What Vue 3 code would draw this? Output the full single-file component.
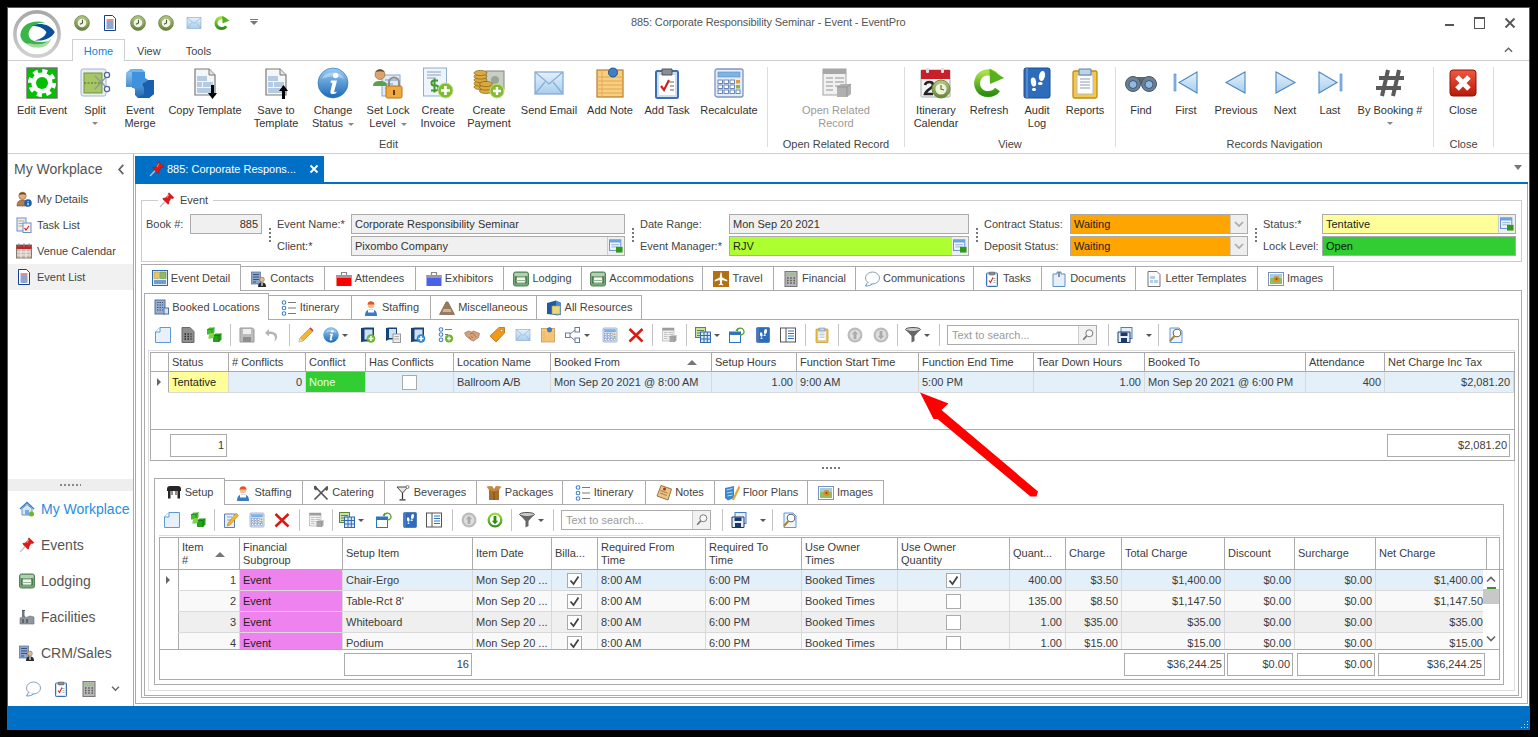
<script setup>
const qat = ['clock', 'doc', 'clock', 'clock', 'mail', 'refresh']

const ribbon = [
  { label: 'Edit', w: 758, items: [
    { i: 'gear', w: 64, t: ['Edit Event'] },
    { i: 'split', w: 42, t: ['Split'], caret: 'below' },
    { i: 'merge', w: 48, t: ['Event', 'Merge'] },
    { i: 'tplDown', w: 82, t: ['Copy Template'] },
    { i: 'tplUp', w: 60, t: ['Save to', 'Template'] },
    { i: 'info', w: 54, t: ['Change', 'Status'], caret: 'inline' },
    { i: 'lock', w: 56, t: ['Set Lock', 'Level'], caret: 'inline' },
    { i: 'invoice', w: 44, t: ['Create', 'Invoice'] },
    { i: 'coins', w: 58, t: ['Create', 'Payment'] },
    { i: 'mail', w: 62, t: ['Send Email'] },
    { i: 'note', w: 60, t: ['Add Note'] },
    { i: 'task', w: 54, t: ['Add Task'] },
    { i: 'calc', w: 70, t: ['Recalculate'] }
  ] },
  { label: 'Open Related Record', w: 137, items: [
    { i: 'related', w: 136, t: ['Open Related', 'Record'], off: true }
  ] },
  { label: 'View', w: 211, items: [
    { i: 'calendar', w: 62, t: ['Itinerary', 'Calendar'] },
    { i: 'refresh', w: 44, t: ['Refresh'] },
    { i: 'audit', w: 52, t: ['Audit', 'Log'] },
    { i: 'reports', w: 44, t: ['Reports'] }
  ] },
  { label: 'Records Navigation', w: 318, items: [
    { i: 'find', w: 50, t: ['Find'] },
    { i: 'first', w: 40, t: ['First'] },
    { i: 'prev', w: 60, t: ['Previous'] },
    { i: 'next', w: 38, t: ['Next'] },
    { i: 'last', w: 52, t: ['Last'] },
    { i: 'hash', w: 68, t: ['By Booking #'], caret: 'below' }
  ] },
  { label: 'Close', w: 60, items: [{ i: 'close', w: 58, t: ['Close'] }] }
]

const myItems = [
  { i: 'person', t: 'My Details' },
  { i: 'tasklist', t: 'Task List' },
  { i: 'venue', t: 'Venue Calendar' },
  { i: 'doc', t: 'Event List', on: true }
]
const navItems = [
  { i: 'home', t: 'My Workplace', on: true },
  { i: 'pin', t: 'Events' },
  { i: 'bed', t: 'Lodging' },
  { i: 'factory', t: 'Facilities' },
  { i: 'crm', t: 'CRM/Sales' }
]

const formSections = [
  { lw: 44, iw: 72, rows: [
    { l: 'Book #:', v: '885', cls: 'ro right' },
    { blank: true }
  ] },
  { lw: 74, iw: 274, rows: [
    { l: 'Event Name:*', v: 'Corporate Responsibility Seminar', cls: 'ro' },
    { l: 'Client:*', v: 'Pixombo Company', cls: 'ro', btn: 'look' }
  ] },
  { lw: 89, iw: 240, rows: [
    { l: 'Date Range:', v: 'Mon Sep 20 2021', cls: 'ro' },
    { l: 'Event Manager:*', v: 'RJV', cls: 'lime', btn: 'look' }
  ] },
  { lw: 86, iw: 178, rows: [
    { l: 'Contract Status:', v: 'Waiting', cls: 'orange', btn: 'combo' },
    { l: 'Deposit Status:', v: 'Waiting', cls: 'orange', btn: 'combo' }
  ] },
  { lw: 59, iw: 194, rows: [
    { l: 'Status:*', v: 'Tentative', cls: 'yellow', btn: 'look' },
    { l: 'Lock Level:', v: 'Open', cls: 'green' }
  ] }
]

const mainTabs = [
  { t: 'Event Detail', i: 'detail', w: 100, on: true },
  { t: 'Contacts', i: 'crm', w: 84 },
  { t: 'Attendees', i: 'attend', w: 91 },
  { t: 'Exhibitors', i: 'exhib', w: 88 },
  { t: 'Lodging', i: 'bed', w: 78 },
  { t: 'Accommodations', i: 'bed', w: 121 },
  { t: 'Travel', i: 'plane', w: 71 },
  { t: 'Financial', i: 'calcGray', w: 82 },
  { t: 'Communications', i: 'chat', w: 118 },
  { t: 'Tasks', i: 'task', w: 68 },
  { t: 'Documents', i: 'clipdoc', w: 94 },
  { t: 'Letter Templates', i: 'letter', w: 122 },
  { t: 'Images', i: 'image', w: 76 }
]
const subTabs = [
  { t: 'Booked Locations', i: 'building', w: 125, on: true },
  { t: 'Itinerary', i: 'itin', w: 83 },
  { t: 'Staffing', i: 'staff', w: 79 },
  { t: 'Miscellaneous', i: 'mountain', w: 106 },
  { t: 'All Resources', i: 'resources', w: 105 }
]
const lowerTabs = [
  { t: 'Setup', i: 'table', w: 71, on: true },
  { t: 'Staffing', i: 'staff', w: 78 },
  { t: 'Catering', i: 'cutlery', w: 82 },
  { t: 'Beverages', i: 'martini', w: 92 },
  { t: 'Packages', i: 'package', w: 86 },
  { t: 'Itinerary', i: 'itin', w: 83 },
  { t: 'Notes', i: 'notes', w: 69 },
  { t: 'Floor Plans', i: 'floor', w: 93 },
  { t: 'Images', i: 'image', w: 76 }
]

const toolsUpper = [
  { i: 'newdoc', w: 25 }, { i: 'docgrid', w: 26 }, { i: 'cubes', w: 26 }, { s: 1, w: 6 },
  { i: 'saveGray', w: 28 }, { i: 'undo', w: 22 }, { s: 1, w: 12 },
  { i: 'pencil', w: 22 }, { i: 'info', w: 36, c: 1 },
  { i: 'docAddG', w: 30 }, { i: 'docCopy', w: 20 }, { i: 'docAddB', w: 30 }, { i: 'itinAdd', w: 26 },
  { i: 'shake', w: 26 }, { i: 'tag', w: 24 }, { i: 'mail', w: 28 }, { i: 'note', w: 22 },
  { i: 'nodes', w: 37, c: 1 }, { i: 'calc', w: 28 }, { i: 'redx', w: 24 }, { s: 1, w: 8 },
  { i: 'related', w: 26 }, { s: 1, w: 8 }, { i: 'gridview', w: 34, c: 1 },
  { i: 'winArrow', w: 26 }, { i: 'audit', w: 26 }, { i: 'listpanel', w: 24 }, { s: 1, w: 10 },
  { i: 'reports', w: 24 }, { s: 1, w: 8 }, { i: 'upGray', w: 26 }, { i: 'downGray', w: 26 }, { s: 1, w: 6 },
  { i: 'funnel', w: 34, c: 1 }, { s: 1, w: 10 }
]
const toolsUpperEnd = [
  { s: 1, w: 8 }, { i: 'saveBlue', w: 42, c: 1, wide: true }, { s: 1, w: 8 }, { i: 'magdoc', w: 28 }
]
const toolsLower = [
  { i: 'newdoc', w: 26 }, { i: 'cubes', w: 26 }, { s: 1, w: 6 },
  { i: 'editdoc', w: 28 }, { i: 'calc', w: 24 }, { i: 'redx', w: 26 }, { s: 1, w: 8 },
  { i: 'related', w: 26 }, { s: 1, w: 6 }, { i: 'gridview', w: 33, c: 1 },
  { i: 'winArrow', w: 32 }, { i: 'audit', w: 20 }, { i: 'listpanel', w: 28 }, { s: 1, w: 8 },
  { i: 'upGray', w: 26 }, { i: 'downGreen', w: 26 }, { s: 1, w: 6 },
  { i: 'funnel', w: 34, c: 1 }, { s: 1, w: 10 }
]

const upperCols = [
  { h: '', w: 18 }, { h: 'Status', w: 60 }, { h: '# Conflicts', w: 77 }, { h: 'Conflict', w: 60 },
  { h: 'Has Conflicts', w: 88 }, { h: 'Location Name', w: 97 }, { h: 'Booked From', w: 161, sort: true },
  { h: 'Setup Hours', w: 85 }, { h: 'Function Start Time', w: 122 }, { h: 'Function End Time', w: 115 },
  { h: 'Tear Down Hours', w: 111 }, { h: 'Booked To', w: 161 }, { h: 'Attendance', w: 79 },
  { h: 'Net Charge Inc Tax', w: 129 }
]
const upperRow = [
  { ind: true }, { v: 'Tentative', c: 'c-yellow' }, { v: '0', c: 'r' }, { v: 'None', c: 'c-none' },
  { box: 'off' }, { v: 'Ballroom A/B' }, { v: 'Mon Sep 20 2021 @ 8:00 AM' }, { v: '1.00', c: 'r' },
  { v: '9:00 AM' }, { v: '5:00 PM' }, { v: '1.00', c: 'r' }, { v: 'Mon Sep 20 2021 @ 6:00 PM' },
  { v: '400', c: 'r' }, { v: '$2,081.20', c: 'r' }
]

const lowerCols = [
  { h: '', w: 19 }, { h: ['Item', '#'], w: 61, sort: true }, { h: ['Financial', 'Subgroup'], w: 103 },
  { h: ['Setup Item'], w: 130 }, { h: ['Item Date'], w: 79 }, { h: ['Billa...'], w: 46 },
  { h: ['Required From', 'Time'], w: 108 }, { h: ['Required To', 'Time'], w: 96 },
  { h: ['Use Owner', 'Times'], w: 96 }, { h: ['Use Owner', 'Quantity'], w: 112 },
  { h: ['Quant...'], w: 56 }, { h: ['Charge'], w: 56 }, { h: ['Total Charge'], w: 103 },
  { h: ['Discount'], w: 70 }, { h: ['Surcharge'], w: 81 }, { h: ['Net Charge'], w: 111 }
]
const lowerData = [
  ['1', 'Chair-Ergo', true, '400.00', '$3.50', '$1,400.00', '$1,400.00', 'sel'],
  ['2', 'Table-Rct 8\'', false, '135.00', '$8.50', '$1,147.50', '$1,147.50', 'odd'],
  ['3', 'Whiteboard', false, '1.00', '$35.00', '$35.00', '$35.00', 'even'],
  ['4', 'Podium', false, '1.00', '$15.00', '$15.00', '$15.00', 'odd']
]
const lowerRows = lowerData.map(([n, item, qty, q, ch, tot, net, kind]) => ({
  kind,
  cells: [
    { ind: n === '1' }, { v: n, c: 'r c-item' }, { v: 'Event', c: 'c-pink' }, { v: item },
    { v: 'Mon Sep 20 ...' }, { box: 'on' }, { v: '8:00 AM' }, { v: '6:00 PM' }, { v: 'Booked Times' },
    { box: qty ? 'on' : 'off' }, { v: q, c: 'r' }, { v: ch, c: 'r' }, { v: tot, c: 'r' },
    { v: '$0.00', c: 'r' }, { v: '$0.00', c: 'r' }, { v: net, c: 'r' }
  ]
}))
</script>

<template>
  <div class="screen">
    <div class="window">
      <svg class="defs" width="0" height="0" aria-hidden="true">
        <defs>
          <linearGradient id="gb" x1="0" y1="0" x2="0" y2="1"><stop offset="0" stop-color="#9ccdf2"/><stop offset="1" stop-color="#1d68b8"/></linearGradient>
          <linearGradient id="gl" x1="0" y1="0" x2="0" y2="1"><stop offset="0" stop-color="#e4f1fb"/><stop offset="1" stop-color="#a9cdec"/></linearGradient>
          <linearGradient id="gg" x1="0" y1="0" x2="0" y2="1"><stop offset="0" stop-color="#a9e04a"/><stop offset="1" stop-color="#2c8f10"/></linearGradient>
          <linearGradient id="gr" x1="0" y1="0" x2="0" y2="1"><stop offset="0" stop-color="#f0583f"/><stop offset="1" stop-color="#b81808"/></linearGradient>
          <linearGradient id="gc" x1="0" y1="0" x2="0" y2="1"><stop offset="0" stop-color="#b7c98a"/><stop offset="1" stop-color="#66813a"/></linearGradient>
          <linearGradient id="gring" x1="0" y1="0" x2="0" y2="1"><stop offset="0" stop-color="#a8a8a8"/><stop offset="1" stop-color="#d0d0d0"/></linearGradient>
        </defs>

        <symbol id="gear" viewBox="0 0 32 32"><rect x="1" y="1" width="30" height="30" fill="#00c000" stroke="#6f6f6f" stroke-width="1.4"/><circle cx="16" cy="16" r="12" fill="none" stroke="#fff" stroke-width="4" stroke-dasharray="5 4.42"/><circle cx="16" cy="16" r="10.6" fill="#fff"/><circle cx="16" cy="16" r="6" fill="#00c000"/></symbol>
        <symbol id="split" viewBox="0 0 32 32"><rect x="2" y="2" width="25" height="27" rx="2" fill="#e8eff7" stroke="#a4b4ca"/><rect x="5" y="6" width="18" height="20" fill="#a6c763" stroke="#73933c"/><path d="M5 16h19" stroke="#4c6a24" stroke-dasharray="2 1.5"/><path d="M16 9l11 11M16 22L27 10" stroke="#8c96a8" stroke-width="1.3"/><circle cx="28" cy="8" r="2.6" fill="#fff" stroke="#4d68a0" stroke-width="1.3"/><circle cx="28" cy="22" r="2.6" fill="#fff" stroke="#4d68a0" stroke-width="1.3"/></symbol>
        <symbol id="merge" viewBox="0 0 32 32"><path d="M2 6l5-4h11l3 3v6l3 2h6v14l-5 4H14l-3-3v-6l-3-2H2z" fill="url(#gb)"/><path d="M2 6l5-4h11l3 3H8z" fill="#6db5ee"/><path d="M24 13h6v14l-5 4H14l6-4v-6l-2-4z" fill="#1a5fb0"/><path d="M8 5h13v6l3 2-6 4-4 4H8z" fill="#3f92de"/></symbol>
        <symbol id="tplDown" viewBox="0 0 32 32"><path d="M6 2h14l6 6v20H6z" fill="#f5f6f8" stroke="#7a7a7a" stroke-width="1.2"/><path d="M20 2v6h6" fill="#dfe2e6" stroke="#7a7a7a"/><path d="M8 9h10v5H8zM8 15h5v5H8zM14 15h10v5H14zM8 21h16v5H8z" fill="#b5cbe2"/><path d="M22 18h3v8h3l-4.500 6-4.500-6h3z" fill="#000"/></symbol>
        <symbol id="tplUp" viewBox="0 0 32 32"><path d="M6 2h14l6 6v20H6z" fill="#f5f6f8" stroke="#7a7a7a" stroke-width="1.2"/><path d="M20 2v6h6" fill="#dfe2e6" stroke="#7a7a7a"/><path d="M8 9h10v5H8zM8 15h5v5H8zM14 15h10v5H14zM8 21h16v5H8z" fill="#b5cbe2"/><path d="M22 32h3v-8h3l-4.500-6-4.500 6h3z" fill="#000"/></symbol>
        <symbol id="info" viewBox="0 0 32 32"><circle cx="16" cy="16" r="15" fill="url(#gb)" stroke="#1f6fb4" stroke-width=".6"/><path d="M5 12a11.500 9 0 0 1 22 0c-6-3.500-16-3.500-22 0z" fill="#fff" opacity=".35"/><circle cx="18.600" cy="8.500" r="2.700" fill="#fff"/><path d="M14 13.500h6l-2.800 11c-.2.9.7 1 2 0l.4.9c-2 2-6.800 2.800-6.200-.9l2.100-8.700h-2z" fill="#fff"/></symbol>
        <symbol id="lock" viewBox="0 0 32 32"><rect x="10" y="8" width="18" height="21" fill="#dfeafb" stroke="#8ba6cc"/><path d="M13 13h12M13 17h8M13 21h6" stroke="#7792bd"/><path d="M1 19c0-4 3-5 7-5s7 1 7 5z" fill="#5aa24a"/><circle cx="8" cy="7.500" r="5" fill="#d9a46e" stroke="#8a5a2a" stroke-width=".6"/><path d="M3.500 5c1-3.500 8-3.500 9 0-3-1-6-1-9 0z" fill="#6a4522"/><path d="M17 19v-3.500a5 5 0 0 1 10 0V19" fill="none" stroke="#8d8d8d" stroke-width="2"/><rect x="14" y="19" width="16" height="12" rx="1.500" fill="#f0a93c" stroke="#b57518"/><rect x="21" y="23" width="2" height="5" fill="#5a3c10"/></symbol>
        <symbol id="invoice" viewBox="0 0 32 32"><rect x="1.500" y="1" width="23" height="28" fill="#eef4fb" stroke="#90add0"/><path d="M5 5h14M5 8h14M5 11h9" stroke="#8da0b8"/><path d="M16 13.500h-4a2.500 2.500 0 0 0 0 5h2a2.500 2.500 0 0 1 0 5H9M12.500 11.500v14" fill="none" stroke="#3c9b2d" stroke-width="2"/><circle cx="23.500" cy="23.500" r="7.500" fill="#82bb2e" stroke="#c8dd9a"/><path d="M23.500 19v9M19 23.500h9" stroke="#fff" stroke-width="2.600"/></symbol>
        <symbol id="coins" viewBox="0 0 32 32"><rect x="13" y="4" width="18" height="18" fill="#c9cfc5" stroke="#7e8778"/><circle cx="22" cy="13" r="4" fill="#9aa594"/><g fill="#d9a83f" stroke="#8a6414" stroke-width=".7"><ellipse cx="7.500" cy="20" rx="6.500" ry="2.600"/><ellipse cx="7.500" cy="16.500" rx="6.500" ry="2.600"/><ellipse cx="7.500" cy="13" rx="6.500" ry="2.600"/><ellipse cx="7.500" cy="9.500" rx="6.500" ry="2.600"/><ellipse cx="7.500" cy="6" rx="6.500" ry="2.600"/><ellipse cx="13" cy="24" rx="6.500" ry="2.600"/><ellipse cx="13" cy="20.500" rx="6.500" ry="2.600"/><ellipse cx="13" cy="17" rx="6.500" ry="2.600"/></g><circle cx="24" cy="24" r="7" fill="#82bb2e" stroke="#c8dd9a"/><path d="M24 20v8M20 24h8" stroke="#fff" stroke-width="2.400"/></symbol>
        <symbol id="mail" viewBox="0 0 32 32"><rect x="2" y="5" width="28" height="22" fill="url(#gl)" stroke="#7ea6cf" stroke-width="1.200"/><path d="M2 5l14 12L30 5M2 27l10-12M30 27L20 15" fill="none" stroke="#86aed6" stroke-width="1.200"/></symbol>
        <symbol id="note" viewBox="0 0 32 32"><rect x="3" y="3" width="26" height="27" fill="#f8cf80" stroke="#b87c2c" stroke-width="1.200"/><path d="M3 10h26M3 14h26M3 18h26M3 22h26M3 26h26" stroke="#e2a650"/><path d="M8 3v27" stroke="#e8a860"/><circle cx="19" cy="5.500" r="4.500" fill="#3f7fc8" stroke="#1f5290"/></symbol>
        <symbol id="task" viewBox="0 0 32 32"><rect x="5" y="4" width="22" height="27" rx="1.500" fill="#cfdff2" stroke="#3d6eb0" stroke-width="2"/><rect x="8" y="8" width="16" height="20" fill="#fff"/><path d="M11 2h10v6H11z" fill="#8a8f96" stroke="#555"/><path d="M10 19l3 4 5-10" fill="none" stroke="#d02020" stroke-width="2.200"/><path d="M17 15h6M19 19h4M19 23h4" stroke="#666"/></symbol>
        <symbol id="calc" viewBox="0 0 32 32"><rect x="2" y="2" width="28" height="28" rx="2" fill="#e4ecf8" stroke="#7b96c4" stroke-width="1.300"/><rect x="5" y="5" width="22" height="5" fill="#7eb3e6" stroke="#5a8cc4" stroke-width=".6"/><g fill="#fff" stroke="#5d7bb0" stroke-width=".9"><rect x="5" y="13" width="4.500" height="3.500"/><rect x="11" y="13" width="4.500" height="3.500"/><rect x="17" y="13" width="4.500" height="3.500"/><rect x="5" y="18" width="4.500" height="3.500"/><rect x="11" y="18" width="4.500" height="3.500"/><rect x="17" y="18" width="4.500" height="3.500"/><rect x="5" y="23" width="4.500" height="3.500"/><rect x="11" y="23" width="4.500" height="3.500"/><rect x="17" y="23" width="4.500" height="3.500"/></g><rect x="23" y="13" width="4" height="3.500" fill="#e89a3c"/><rect x="23" y="18" width="4" height="3.500" fill="#86b84a"/><rect x="23" y="23" width="4" height="3.500" fill="#fff" stroke="#5d7bb0" stroke-width=".9"/></symbol>
        <symbol id="related" viewBox="0 0 32 32"><rect x="3" y="2" width="23" height="26" fill="#f0f0f0" stroke="#9a9a9a"/><rect x="3" y="2" width="23" height="5" fill="#9e9e9e"/><path d="M6 11h7M15 11h9M6 15h7M15 15h9M6 19h7M15 19h7M6 23h7" stroke="#aaa" stroke-width="1.300"/><path d="M17 20l4-3h10v10l-4 3H17z" fill="#a8a8a8"/><path d="M27 20v10M17 20h10l4-3" fill="none" stroke="#888"/></symbol>
        <symbol id="calendar" viewBox="0 0 32 32"><rect x="1" y="3" width="29" height="27" rx="1" fill="#f4f4f4" stroke="#aaa"/><rect x="1" y="3" width="29" height="9" fill="#c8202a"/><rect x="6" y="1" width="3" height="5" rx="1" fill="#ddd"/><rect x="21" y="1" width="3" height="5" rx="1" fill="#ddd"/><path d="M5 18c1-4 8-4 8 0 0 3-7 5-8 9h8" fill="none" stroke="#222" stroke-width="2.600"/><circle cx="21" cy="22" r="9" fill="url(#gc)" stroke="#6b8a3a"/><circle cx="21" cy="22" r="5.600" fill="#eef2d8"/><path d="M21 18v4l3 1" fill="none" stroke="#5b7a2a" stroke-width="1.200"/></symbol>
        <symbol id="refresh" viewBox="0 0 32 32"><path d="M23 8.500C18 3.500 8 4.500 5 12c-3 7.500 2 15 10 15 4 0 7.500-1.600 9.500-4.500" fill="none" stroke="url(#gg)" stroke-width="6"/><path d="M16.500 1.500L31 11l-14 6z" fill="#57b01d"/></symbol>
        <symbol id="audit" viewBox="0 0 32 32"><rect x="3" y="1" width="26" height="30" rx="2" fill="#2d6cba" stroke="#1d4d90"/><path d="M6 1v30" stroke="#79a6db"/><g fill="#fff"><ellipse cx="21" cy="9" rx="3" ry="5" transform="rotate(12 21 9)"/><rect x="17" y="15" width="4.500" height="3" rx="1.500"/><ellipse cx="12.500" cy="15" rx="2.600" ry="4.500" transform="rotate(-10 12.500 15)"/><rect x="11" y="21" width="4" height="3" rx="1.500"/></g></symbol>
        <symbol id="reports" viewBox="0 0 32 32"><rect x="4" y="4" width="24" height="27" rx="1.500" fill="#f4c948" stroke="#c08a18" stroke-width="1.300"/><rect x="8" y="8" width="16" height="19" fill="#fdfdfd" stroke="#b6bcc4"/><path d="M10 2h12v6H10z" fill="#bcd3ea" stroke="#5a7ea6"/><path d="M11 12h10M11 15h10M11 18h10M11 21h10" stroke="#8aa0b8"/></symbol>
        <symbol id="find" viewBox="0 0 32 32"><rect x="12" y="10" width="8" height="6" fill="#5d6b78"/><circle cx="8" cy="17" r="7.500" fill="#6d7f90" stroke="#4a5866"/><circle cx="24" cy="17" r="7.500" fill="#6d7f90" stroke="#4a5866"/><circle cx="8" cy="17.500" r="4" fill="#8fb9dd" stroke="#3a5a80"/><circle cx="24" cy="17.500" r="4" fill="#8fb9dd" stroke="#3a5a80"/></symbol>
        <symbol id="first" viewBox="0 0 32 32"><rect x="4" y="7" width="2" height="17" fill="#8dbde8" stroke="#4a88c6" stroke-width=".6"/><path d="M27 5v21L9 15.500z" fill="url(#gl)" stroke="#4a88c6" stroke-width="1.100"/></symbol>
        <symbol id="prev" viewBox="0 0 32 32"><path d="M25 5v21L6 15.500z" fill="url(#gl)" stroke="#4a88c6" stroke-width="1.100"/></symbol>
        <symbol id="next" viewBox="0 0 32 32"><path d="M7 5v21l19-10.500z" fill="url(#gl)" stroke="#4a88c6" stroke-width="1.100"/></symbol>
        <symbol id="last" viewBox="0 0 32 32"><rect x="26" y="7" width="2" height="17" fill="#8dbde8" stroke="#4a88c6" stroke-width=".6"/><path d="M5 5v21l18-10.500z" fill="url(#gl)" stroke="#4a88c6" stroke-width="1.100"/></symbol>
        <symbol id="hash" viewBox="0 0 32 32"><path d="M14 3L8 29M25 3l-6 26M5 11h25M2 21h25" fill="none" stroke="#5a5a5a" stroke-width="4"/></symbol>
        <symbol id="close" viewBox="0 0 32 32"><rect x="3" y="3" width="26" height="26" rx="3" fill="url(#gr)" stroke="#8f1408"/><path d="M10 10l12 12M22 10L10 22" stroke="#fff" stroke-width="5"/></symbol>

        <symbol id="clock" viewBox="0 0 16 16"><circle cx="8" cy="8" r="7.400" fill="url(#gc)" stroke="#5c7534" stroke-width=".7"/><circle cx="8" cy="8" r="4.300" fill="#f2f4ea"/><path d="M8.500 4.700V8L6 9.300" fill="none" stroke="#4c5a36" stroke-width="1.100"/></symbol>
        <symbol id="doc" viewBox="0 0 16 16"><path d="M2.500.5h8l3 3v12h-11z" fill="#fff" stroke="#143f8c"/><path d="M4.500 5h7" stroke="#c22" /><path d="M4.500 7h7M4.500 9h7M4.500 11h7M4.500 13h7" stroke="#1d4f9c"/></symbol>
        <symbol id="person" viewBox="0 0 16 16"><path d="M1 15c0-4 2-6 5.500-6S12 11 12 15z" fill="#b07f4e" stroke="#70502a" stroke-width=".6"/><circle cx="6.500" cy="4.800" r="3.700" fill="#e2b07e" stroke="#845a30" stroke-width=".6"/><path d="M3 4c.6-3.500 6.500-3.500 7 0-2-1-4.500-1-7 0z" fill="#6b4622"/><circle cx="12" cy="12" r="3.800" fill="#1e5fb0"/><path d="M12 10.200v.8M12 11.800v2.400" stroke="#fff" stroke-width="1.200"/></symbol>
        <symbol id="tasklist" viewBox="0 0 16 16"><rect x="1" y="1" width="9" height="13" fill="#e8eef8" stroke="#6e8fbe"/><path d="M2.500 4h6M2.500 6.500h6M2.500 9h6" stroke="#e0a050"/><rect x="7" y="6" width="8" height="9.500" fill="#f4f4f4" stroke="#6e8fbe"/><path d="M8.500 11l1.500 2 3-4" fill="none" stroke="#c22" stroke-width="1.200"/></symbol>
        <symbol id="venue" viewBox="0 0 16 16"><rect x=".5" y="2" width="15" height="13" fill="#c9bdb1" stroke="#857a70"/><rect x=".5" y="2" width="15" height="4" fill="#b8282c"/><path d="M3 .5v3M8 .5v3M13 .5v3" stroke="#888" stroke-width="1.300"/><path d="M5 6v9M10 6v9M1 9h14M1 12h14" stroke="#f0ece8"/></symbol>
        <symbol id="home" viewBox="0 0 16 16"><path d="M1 8l7-6.500L15 8" fill="none" stroke="#3a7cc0" stroke-width="1.500"/><path d="M3 7.500V14h10V7.500L8 3.500z" fill="#d7e6f5" stroke="#6a94c0"/><rect x="6" y="9" width="4" height="5" fill="#7ca8d6"/><circle cx="12.500" cy="13" r="2.500" fill="#6bb62e"/></symbol>
        <symbol id="pin" viewBox="0 0 16 16"><path d="M6 9.800L1 15" stroke="#c4c4c4" stroke-width="1.300"/><path d="M10 .8l5 5-1.800.8-1.200-.3L9.800 10l.2 1.500-1 .8-5.300-5.300.8-1 1.500.2L9.500 3l-.3-1.200z" fill="#e01818" stroke="#981010" stroke-width=".5"/><path d="M9.800 2.500L8 6" stroke="#ff8a7a"/></symbol>
        <symbol id="bed" viewBox="0 0 16 16"><rect x=".5" y="1" width="15" height="14" rx="2" fill="#76a878" stroke="#558058"/><rect x="1.500" y="2" width="13" height="3" fill="#b3d0b4"/><path d="M3 6.500h10v5H3z" fill="#f3f6f0"/><path d="M3 5.500v7M13 5.500v7" stroke="#3b6040" stroke-width="1.300"/><path d="M3 9.500h10" stroke="#98b39a"/></symbol>
        <symbol id="factory" viewBox="0 0 16 16"><path d="M1 9l5-2v2l5-2 4 1v7H1z" fill="#9097a0" stroke="#666c74" stroke-width=".6"/><rect x="3" y="2" width="2.500" height="6" fill="#707880"/><path d="M3 1.500h3" stroke="#555"/><path d="M3 11h2M7 11h2M3 13h2M7 13h2" stroke="#333" stroke-width="1.100"/></symbol>
        <symbol id="crm" viewBox="0 0 16 16"><rect x=".5" y="1" width="9" height="12" fill="#8aa6cc" stroke="#566c92" stroke-width=".7"/><path d="M2 3.500h6M2 6h6M2 8.500h6M2 11h3" stroke="#3d5478"/><circle cx="11" cy="8.500" r="2.400" fill="#e4b88a" stroke="#6a4a28" stroke-width=".4"/><path d="M7 16c0-3.500 1.500-4.500 4-4.500s4 1 4 4.500z" fill="#2b2b2b"/><path d="M10.500 11.800h1l.2 3h-1.400z" fill="#fff"/></symbol>
        <symbol id="chat" viewBox="0 0 16 16"><ellipse cx="8.500" cy="7" rx="7" ry="6" fill="#fff" stroke="#8ea2b4"/><path d="M3.500 11.500L1.500 15c3 0 5-.5 7-2" fill="#fff" stroke="#3f8fcf" stroke-width=".9"/></symbol>
        <symbol id="detail" viewBox="0 0 16 16"><rect x=".5" y=".5" width="15" height="15" fill="#e6eef8" stroke="#2f6ab0"/><rect x="2" y="2" width="5.500" height="6.500" fill="#e4c66a" stroke="#a68a2a" stroke-width=".5"/><rect x="8.500" y="2" width="5.500" height="6.500" fill="#8dbd60" stroke="#5c8a34" stroke-width=".5"/><rect x="2" y="10" width="12" height="4" fill="#6b9fd4"/></symbol>
        <symbol id="attend" viewBox="0 0 16 16"><path d="M5.500 4V1.500h5V4" fill="none" stroke="#8a8a8a" stroke-width="1.200"/><rect x=".5" y="4" width="15" height="11" fill="#f00"/><rect x=".5" y="4" width="15" height="3" fill="#9a9a9a"/></symbol>
        <symbol id="exhib" viewBox="0 0 16 16"><path d="M5.500 4V1.500h5V4" fill="none" stroke="#8a8a8a" stroke-width="1.200"/><rect x=".5" y="4" width="15" height="11" fill="#4a62e8"/><rect x=".5" y="4" width="15" height="3" fill="#9a9a9a"/></symbol>
        <symbol id="plane" viewBox="0 0 16 16"><rect width="16" height="16" fill="#b36f14"/><path d="M7.500 1.500h1l.8 5 5 2.500v1.500l-5-1.500-.5 3.500 1.500 1v1L8 13.800 5.700 14.500v-1l1.500-1-.5-3.500-5 1.500V9l5-2.500z" fill="#fff"/></symbol>
        <symbol id="calcGray" viewBox="0 0 16 16"><rect x="2" y=".5" width="12" height="15" fill="#b7b7b7" stroke="#777"/><rect x="3.500" y="2" width="9" height="3" fill="#9dc58a"/><path d="M4 7h1.500M7.200 7h1.500M10.500 7h1.500M4 9.500h1.500M7.200 9.500h1.500M10.500 9.500h1.500M4 12h1.500M7.200 12h1.500M10.500 12h1.500" stroke="#555" stroke-width="1.400"/></symbol>
        <symbol id="clipdoc" viewBox="0 0 16 16"><path d="M2 3h4V1h4v2h4v12.500H2z" fill="#e7f0fa" stroke="#5a8fcb"/><path d="M8 1v5" stroke="#555" stroke-width="1.200"/></symbol>
        <symbol id="letter" viewBox="0 0 16 16"><path d="M2 .5h9l3 3v12H2z" fill="#fafafa" stroke="#777"/><path d="M4 5h5v3H4zM4 9h3v3H4zM8 9h4v3H8z" fill="#b7cde4"/></symbol>
        <symbol id="image" viewBox="0 0 16 16"><rect x=".5" y="1.500" width="15" height="13" fill="#fff" stroke="#7a93bd"/><rect x="2" y="3" width="12" height="10" fill="#92bb62"/><rect x="2" y="3" width="12" height="4" fill="#a4cce8"/><circle cx="8.500" cy="8" r="3" fill="#d98e20"/><circle cx="8.500" cy="8" r="1" fill="#7c4a08"/></symbol>
        <symbol id="building" viewBox="0 0 16 16"><rect x="2" y="1" width="10" height="14" fill="#96aed0" stroke="#5a7198"/><path d="M4 3.500h6M4 6h6M4 8.500h6M4 11h6" stroke="#3e5580" stroke-dasharray="1.500 1"/><rect x="11" y="9" width="4.500" height="6" fill="#d7e2f0" stroke="#5a7198"/></symbol>
        <symbol id="itin" viewBox="0 0 16 16"><g fill="none" stroke="#3f83c8" stroke-width="1.100"><circle cx="3" cy="2.500" r="1.800"/><circle cx="3" cy="8" r="1.800"/><circle cx="3" cy="13.500" r="1.800"/></g><path d="M7 2.500h8M7 8h8M7 13.500h8" stroke="#7a7a7a" stroke-width="1.100"/></symbol>
        <symbol id="itinAdd" viewBox="0 0 16 16"><g fill="none" stroke="#3f83c8" stroke-width="1.100"><circle cx="3" cy="2.500" r="1.800"/><circle cx="3" cy="7.500" r="1.800"/><circle cx="3" cy="12.800" r="1.800"/></g><path d="M7 2.500h7M7 7.500h3" stroke="#7a7a7a" stroke-width="1.100"/><circle cx="11" cy="11.500" r="4" fill="#6bb62e"/><path d="M11 9.500v4M9 11.500h4" stroke="#fff" stroke-width="1.300"/></symbol>
        <symbol id="staff" viewBox="0 0 16 16"><path d="M2 16c0-5 2-6.500 6-6.500s6 1.500 6 6.500z" fill="#3a7cc4"/><path d="M5 9.500h6v3H5z" fill="#fff"/><circle cx="8" cy="5" r="3.300" fill="#f2c08e"/><path d="M4.500 4.500C4.500 0 11.500 0 11.500 4.500z" fill="#e8521e"/></symbol>
        <symbol id="mountain" viewBox="0 0 16 16"><path d="M.5 14.500L6 4l1-2h2l1 2 5.500 10.500z" fill="#9a7a5c" stroke="#6c5238" stroke-width=".6"/><path d="M4.500 9h7l1 3h-9z" fill="#cbb69e"/></symbol>
        <symbol id="resources" viewBox="0 0 16 16"><path d="M1 3l9-2.500V15l-9-1z" fill="#235a9e"/><path d="M10 .5l5 2V15l-5 .5z" fill="#4d8ace"/><rect x="6" y="6" width="8" height="8" fill="#ecd77c" stroke="#b4a050" stroke-width=".6"/></symbol>
        <symbol id="table" viewBox="0 0 16 16"><path d="M1 5c0-2 1-3 3-3h8c2 0 3 1 3 3v2H1z" fill="#252525"/><rect x="2" y="7" width="2.500" height="7.500" fill="#252525"/><rect x="11.500" y="7" width="2.500" height="7.500" fill="#252525"/><rect x="5.500" y="7" width="1" height="4" fill="#252525"/><rect x="9.500" y="7" width="1" height="4" fill="#252525"/></symbol>
        <symbol id="cutlery" viewBox="0 0 16 16"><path d="M1.500 1l13 13.500" stroke="#555" stroke-width="1.700"/><path d="M14.500 1.500L1.500 14.500" stroke="#555" stroke-width="1.700"/><path d="M14.500 1c1 1.500 1 4-1 5l-1.500-1.500z" fill="#555"/><path d="M1 1v3l2 1.500 1.500-1.500L3 1z" fill="#555"/></symbol>
        <symbol id="martini" viewBox="0 0 16 16"><path d="M2 2h11L7.500 8z" fill="#e8e8e8" stroke="#444"/><path d="M7.500 8v6M4.500 14.800h6" stroke="#333" stroke-width="1.200"/><circle cx="12.500" cy="2" r="1.500" fill="#fff" stroke="#777"/></symbol>
        <symbol id="package" viewBox="0 0 16 16"><path d="M3 5h10v10H3z" fill="#a86c2c"/><path d="M3 5L.5 1.500 6 1l2 3 2-3 5.500.5L13 5l-5 1.500z" fill="#c48a44"/><path d="M8 6.500V15" stroke="#7c4c18"/></symbol>
        <symbol id="notes" viewBox="0 0 16 16"><path d="M5 .5l10.500 3.500-3.500 11L1 11z" fill="#e8c48a" stroke="#9c7438"/><path d="M4.500 5.500l7 2.500M4 8l7 2.500" stroke="#a8803f"/><circle cx="8.500" cy="4" r="1.500" fill="#c2263a"/></symbol>
        <symbol id="floor" viewBox="0 0 16 16"><path d="M1 3l9-2v12l-6 2.500L1 13z" fill="#3a87cf"/><path d="M2.500 5l6-1.500M3 8l5.500-1M3.500 11l5-1" stroke="#bcdcf5"/><path d="M9 15L15.500 1.500" stroke="#e8a830" stroke-width="2.200"/></symbol>
        <symbol id="newdoc" viewBox="0 0 16 16"><path d="M5 .5h10.500v15H.5V5z" fill="#e8f1fb" stroke="#5d9ad8"/><path d="M5 .5V5H.5" fill="#fff" stroke="#5d9ad8"/></symbol>
        <symbol id="docgrid" viewBox="0 0 16 16"><path d="M2 .5h8l4 4v11H2z" fill="#8e8e8e" stroke="#6a6a6a"/><path d="M4.500 7h1.500M7.500 7h1.500M10.500 7h1M4.500 9.500h1.500M7.500 9.500h1.500M10.500 9.500h1M4.500 12h1.500M7.500 12h1.500M10.500 12h1" stroke="#2a2a2a" stroke-width="1.400"/></symbol>
        <symbol id="cubes" viewBox="0 0 16 16"><path d="M1 2.500l2.500-2h5v5l-2.500 2h-5z" fill="#45bc2c"/><path d="M1 2.500h5v5M6 2.500L8.500.5" fill="none" stroke="#1e7a10" stroke-width=".6"/><path d="M7 8.500l2.500-2h6v6l-2.500 2.500H7z" fill="#24a118"/><path d="M7 8.500h6v6.500M13 8.500l2.500-2" fill="none" stroke="#0f6a08" stroke-width=".6"/><path d="M4 6h4v4l-2 1.500h-4z" fill="#7ad648"/></symbol>
        <symbol id="saveGray" viewBox="0 0 16 16"><path d="M1 1h12.500L15 2.500V15H1z" fill="#bcbcbc" stroke="#999"/><rect x="4" y="2" width="8" height="5" fill="#eee"/><rect x="4" y="10" width="8" height="5" fill="#8e8e8e"/></symbol>
        <symbol id="undo" viewBox="0 0 16 16"><path d="M5 2L1 6l4 3.500V7c5-.5 7 2 5.500 7.500 4-3 4.500-10-5.500-10z" fill="#b4b4b4"/></symbol>
        <symbol id="pencil" viewBox="0 0 16 16"><path d="M11.500 1.500l3 3L5 14 1 15l1-4z" fill="#f2b630" stroke="#b27e14" stroke-width=".6"/><path d="M11.500 1.500l3 3 1-1.200-3-3z" fill="#d83a3a"/><path d="M2 11l3 3-4 1z" fill="#f2d8b0"/></symbol>
        <symbol id="docAddG" viewBox="0 0 16 16"><path d="M1 1l4-.5h9v14H5L1 15z" fill="#15437e"/><rect x="4.500" y="2.500" width="8" height="10" fill="#cfe0f2"/><circle cx="11" cy="11.500" r="4.300" fill="#6bb62e"/><path d="M11 9v5M8.500 11.500h5" stroke="#fff" stroke-width="1.500"/></symbol>
        <symbol id="docCopy" viewBox="0 0 16 16"><path d="M1 1l3-.5h8v12H4L1 14z" fill="#15437e"/><rect x="4" y="2" width="7" height="9" fill="#cfe0f2"/><rect x="8" y="7" width="7.500" height="8.500" fill="#eee" stroke="#999"/><path d="M9.500 9.500h4.500M9.500 12h4.500" stroke="#aaa"/></symbol>
        <symbol id="docAddB" viewBox="0 0 16 16"><path d="M1 1l4-.5h9v14H5L1 15z" fill="#15437e"/><rect x="4.500" y="2.500" width="8" height="10" fill="#cfe0f2"/><circle cx="11" cy="11.500" r="4.300" fill="#2a8ad6"/><path d="M11 9v5M8.500 11.500h5" stroke="#fff" stroke-width="1.500"/></symbol>
        <symbol id="shake" viewBox="0 0 16 16"><path d="M.5 6l4-2 3 1 2-1 6 2.500-1 4-5 3.500-2-.5-5-4z" fill="#d6a07a" stroke="#93664a" stroke-width=".6"/><path d="M6 7l3-1 3 4M5 10l2 2M7 9l2 2" fill="none" stroke="#93664a" stroke-width=".7"/></symbol>
        <symbol id="tag" viewBox="0 0 16 16"><path d="M10 .5h5.500V6L7 15 1 9z" fill="#f09a1c" stroke="#b56e08" stroke-width=".8"/><circle cx="12.500" cy="3.500" r="1.300" fill="#fff" stroke="#8a5a10" stroke-width=".6"/></symbol>
        <symbol id="nodes" viewBox="0 0 16 16"><g fill="#fff" stroke="#5c7ea8"><rect x=".5" y="6" width="4.500" height="4.500"/><rect x="10" y=".5" width="4.500" height="4.500"/><rect x="10" y="11" width="4.500" height="4.500"/></g><path d="M5 7l5-4M5 9.500l5 4" stroke="#7d7d7d"/></symbol>
        <symbol id="redx" viewBox="0 0 16 16"><path d="M1.500 2L14.500 14.500M14.500 2L1.500 14.500" stroke="#d81c14" stroke-width="2.600"/></symbol>
        <symbol id="gridview" viewBox="0 0 16 16"><rect x=".5" y=".5" width="10" height="10" fill="#c9dfae" stroke="#5c8a34"/><path d="M2 3.500h7M2 6h5M2 8.500h3" stroke="#5c8a34"/><rect x="5.500" y="5" width="10" height="10.500" fill="#dce9f7" stroke="#2f6ab0"/><path d="M5.500 8.500h10M5.500 12h10M9 5v10.500M12.300 5v10.500" stroke="#2f6ab0"/></symbol>
        <symbol id="winArrow" viewBox="0 0 16 16"><rect x=".5" y="5" width="11" height="10.500" fill="#fff" stroke="#2f74c0"/><rect x=".5" y="5" width="11" height="3" fill="#2f74c0"/><path d="M8 4c0-3 5-4 6.500-1S14 8 11 8" fill="none" stroke="#4fa72c" stroke-width="1.300"/><path d="M6.500 3.500l2.500-3v4z" fill="#4fa72c"/></symbol>
        <symbol id="listpanel" viewBox="0 0 16 16"><rect x=".5" y="1" width="15" height="14" fill="#fff" stroke="#555"/><path d="M6 1v14" stroke="#555"/><path d="M8 4h6M8 6.500h6M8 9h6M8 11.500h6" stroke="#2f74c0"/></symbol>
        <symbol id="upGray" viewBox="0 0 16 16"><circle cx="8" cy="8" r="7.500" fill="#bcbcbc"/><circle cx="8" cy="8" r="5.200" fill="#dedede"/><path d="M8 3.800l3.200 3.500H9.400V12H6.600V7.300H4.800z" fill="#aaa"/></symbol>
        <symbol id="downGray" viewBox="0 0 16 16"><circle cx="8" cy="8" r="7.500" fill="#bcbcbc"/><circle cx="8" cy="8" r="5.200" fill="#dedede"/><path d="M8 12.200L4.800 8.700h1.800V4h2.800v4.700h1.800z" fill="#aaa"/></symbol>
        <symbol id="downGreen" viewBox="0 0 16 16"><circle cx="8" cy="8" r="7.500" fill="url(#gg)"/><circle cx="8" cy="8" r="5.200" fill="#fff"/><path d="M8 12.200L4.800 8.700h1.800V4h2.800v4.700h1.800z" fill="#2a8c12"/></symbol>
        <symbol id="funnel" viewBox="0 0 16 16"><ellipse cx="8" cy="2.500" rx="7.500" ry="2" fill="#ccc" stroke="#555"/><path d="M.5 2.500L6.500 9v6.500l3-1.500V9l6-6.500c-2 2-13 2-15 0z" fill="#666"/></symbol>
        <symbol id="saveBlue" viewBox="0 0 16 16"><rect x="4" y=".5" width="11" height="11" fill="#e4eefa" stroke="#4a7ebc"/><path d="M1 5h12v10.500H1z" fill="#e8edf4" stroke="#193a6a"/><rect x="3.500" y="5.500" width="7" height="3.500" fill="#193a6a"/><rect x="4" y="11" width="6" height="4.500" fill="#193a6a"/></symbol>
        <symbol id="magdoc" viewBox="0 0 16 16"><path d="M2 1h9l3 3v11.500H2z" fill="#eef4fb" stroke="#5d9ad8"/><circle cx="9" cy="6" r="3.800" fill="#fff" stroke="#6a6a6a" stroke-width="1.100"/><path d="M6.500 9L2 14" stroke="#b2822c" stroke-width="2"/></symbol>
        <symbol id="editdoc" viewBox="0 0 16 16"><path d="M1.500 2h10v13.500h-10z" fill="#e8f1fb" stroke="#5d7ea8"/><path d="M4 5h5M4 8h4" stroke="#8aa0c0"/><path d="M13 1l2.500 2.500L7 13l-3 1 1-3z" fill="#f2b630" stroke="#a87414" stroke-width=".5"/></symbol>
        <symbol id="search" viewBox="0 0 16 16"><circle cx="9.500" cy="6" r="4" fill="#f8f8f8" stroke="#777" stroke-width="1.100"/><path d="M6.500 9L2.500 13.500" stroke="#777" stroke-width="1.800"/></symbol>
        <symbol id="lookup" viewBox="0 0 16 16"><rect x=".5" y="1" width="13" height="12" fill="#f0f6fc" stroke="#4e86c8"/><rect x=".5" y="1" width="13" height="3" fill="#6ea4de"/><path d="M2.500 6.500h9M2.500 9h9" stroke="#8aa8cc"/><rect x="8" y="9" width="7.500" height="6.500" fill="#2f9a18"/></symbol>
        <symbol id="logo" viewBox="0 0 46 46"><circle cx="23" cy="23" r="21.200" fill="#fff" stroke="url(#gring)" stroke-width="3.400"/><path d="M7 24C8 14 18 9 31 12c-9 0-15 4-16 10-1 7 7 10 19 8-8 6-26 6-27-6z" fill="#39b54a"/><path d="M18 15c7-3 17-2 22 6-3 6-10 9-19 8 6-1 10-4 11-8-3-4-8-6-14-6z" fill="#0a4f9e"/><path d="M17 32c6 2 14 1 20-5-2 6-8 10-15 9-4 0-8-2-9-4z" fill="#a4d9a0"/></symbol>
      </svg>

      <header class="header">
        <div class="logo-col"><svg class="logo"><use href="#logo"/></svg></div>
        <div class="header-main">
          <div class="titlebar">
            <div class="qat">
              <svg v-for="(q, n) in qat" :key="n" class="ic16 qat-ic"><use :href="`#${q}`"/></svg>
              <span class="qat-more"></span>
            </div>
            <div class="title">885: Corporate Responsibility Seminar - Event - EventPro</div>
            <div class="winctl">
              <span class="w-min"></span>
              <span class="w-max"></span>
              <svg class="w-close" viewBox="0 0 12 12"><path d="M1.500 1.500l9 9M10.500 1.500l-9 9" stroke="#555" stroke-width="1.800"/></svg>
            </div>
          </div>
          <div class="ribtabs">
            <span class="rtab on">Home</span>
            <span class="rtab view">View</span>
            <span class="rtab tools">Tools</span>
            <svg class="collapse" viewBox="0 0 10 6"><path d="M1 5l4-4 4 4" fill="none" stroke="#666" stroke-width="1.600"/></svg>
          </div>
        </div>
      </header>

      <div class="ribbon">
        <section v-for="g in ribbon" :key="g.label" class="rgroup" :style="{ width: g.w + 'px' }">
          <div class="rbtns">
            <div v-for="b in g.items" :key="b.t[0]" class="rbtn" :class="{ off: b.off }" :style="{ width: b.w + 'px' }">
              <svg class="ic32"><use :href="`#${b.i}`"/></svg>
              <div class="rlabel">
                <div v-for="(l, n) in b.t" :key="n">{{ l }}<i v-if="b.caret === 'inline' && n === 1" class="caret cmini"></i></div>
                <i v-if="b.caret === 'below'" class="caret cmini cblock"></i>
              </div>
            </div>
          </div>
          <div class="gname">{{ g.label }}</div>
        </section>
      </div>

      <div class="main">
        <aside class="side">
          <div class="side-head"><span>My Workplace</span><svg class="side-arrow" viewBox="0 0 8 12"><path d="M6.500 1L2 6l4.500 5" fill="none" stroke="#666" stroke-width="2"/></svg></div>
          <div class="side-list">
            <div v-for="m in myItems" :key="m.t" class="side-item" :class="{ on: m.on }">
              <svg class="ic16"><use :href="`#${m.i}`"/></svg><span>{{ m.t }}</span>
            </div>
          </div>
          <div class="side-split"><i></i></div>
          <div v-for="n in navItems" :key="n.t" class="nav-item" :class="{ on: n.on }">
            <svg class="ic16"><use :href="`#${n.i}`"/></svg><span>{{ n.t }}</span>
          </div>
          <div class="side-foot">
            <svg class="ic16"><use href="#chat"/></svg>
            <svg class="ic16"><use href="#task"/></svg>
            <svg class="ic16"><use href="#calcGray"/></svg>
            <svg class="foot-more" viewBox="0 0 10 7"><path d="M1 1l4 4 4-4" fill="none" stroke="#666" stroke-width="1.700"/></svg>
          </div>
        </aside>

        <div class="docarea">
          <div class="doctabs">
            <div class="doctab">
              <svg class="ic16"><use href="#pin"/></svg>
              <span>885: Corporate Respons...</span>
              <svg class="doc-x" viewBox="0 0 10 10"><path d="M1.500 1.500l7 7M8.500 1.500l-7 7" stroke="#fff" stroke-width="1.800"/></svg>
            </div>
            <i class="doc-more"></i>
          </div>
          <div class="docpanel">
            <fieldset class="evgroup">
              <legend><svg class="ic16"><use href="#pin"/></svg><span>Event</span></legend>
              <div class="form">
                <template v-for="(s, si) in formSections" :key="si">
                  <div v-if="si" class="dots"><i></i></div>
                  <div class="fsec" :style="{ gridTemplateColumns: `${s.lw}px ${s.iw}px` }">
                    <template v-for="(r, ri) in s.rows" :key="ri">
                      <template v-if="!r.blank">
                        <label>{{ r.l }}</label>
                        <div class="inp" :class="r.cls">
                          <span class="val">{{ r.v }}</span>
                          <span v-if="r.btn === 'look'" class="ibtn"><svg class="ic14"><use href="#lookup"/></svg></span>
                          <span v-if="r.btn === 'combo'" class="ibtn combo"><svg viewBox="0 0 10 7"><path d="M1 1l4 4 4-4" fill="none" stroke="#aaa" stroke-width="1.700"/></svg></span>
                        </div>
                      </template>
                    </template>
                  </div>
                </template>
              </div>
            </fieldset>

            <div class="tabstrip main-strip">
              <div v-for="t in mainTabs" :key="t.t" class="tab" :class="{ on: t.on }" :style="{ width: t.w + 'px' }">
                <svg class="ic16"><use :href="`#${t.i}`"/></svg><span>{{ t.t }}</span>
              </div>
            </div>
            <div class="panel-a">
              <div class="tabstrip sub-strip">
                <div v-for="t in subTabs" :key="t.t" class="tab" :class="{ on: t.on }" :style="{ width: t.w + 'px' }">
                  <svg class="ic16"><use :href="`#${t.i}`"/></svg><span>{{ t.t }}</span>
                </div>
              </div>
              <div class="panel-b">
                <div class="toolbar">
                  <template v-for="(t, n) in toolsUpper" :key="n">
                    <span v-if="t.s" class="tsep" :style="{ width: t.w + 'px' }"><i></i></span>
                    <span v-else class="tool" :class="{ wide: t.wide }" :style="{ width: t.w + 'px' }"><svg class="ic16"><use :href="`#${t.i}`"/></svg><i v-if="t.c" class="caret"></i></span>
                  </template>
                  <div class="searchbox up"><span>Text to search...</span><b><svg class="ic14"><use href="#search"/></svg></b></div>
                  <template v-for="(t, n) in toolsUpperEnd" :key="n">
                    <span v-if="t.s" class="tsep" :style="{ width: t.w + 'px' }"><i></i></span>
                    <span v-else class="tool" :class="{ wide: t.wide }" :style="{ width: t.w + 'px' }"><svg class="ic16"><use :href="`#${t.i}`"/></svg><i v-if="t.c" class="caret"></i></span>
                  </template>
                </div>
                <div class="box">
                  <div class="grid grid-up">
                    <div class="ghead">
                      <div v-for="(c, n) in upperCols" :key="n" class="gh" :style="{ width: c.w + 'px' }">
                        <span>{{ c.h }}</span><i v-if="c.sort" class="sort"></i>
                      </div>
                    </div>
                    <div class="gbody">
                      <div class="grow sel">
                        <div v-for="(c, n) in upperRow" :key="n" class="gc" :class="c.c" :style="{ width: upperCols[n].w + 'px' }">
                          <i v-if="c.ind" class="rowmark"></i>
                          <span v-if="c.box" class="chk"></span>
                          <template v-if="c.v">{{ c.v }}</template>
                        </div>
                      </div>
                    </div>
                    <div class="gfoot">
                      <span class="fbox fu1">1</span>
                      <span class="fbox fu2">$2,081.20</span>
                    </div>
                  </div>

                  <div class="vsplit"><i></i></div>

                  <div class="lower">
                    <div class="tabstrip low-strip">
                      <div v-for="t in lowerTabs" :key="t.t" class="tab" :class="{ on: t.on }" :style="{ width: t.w + 'px' }">
                        <svg class="ic16"><use :href="`#${t.i}`"/></svg><span>{{ t.t }}</span>
                      </div>
                    </div>
                    <div class="panel-c">
                      <div class="toolbar t-low">
                        <template v-for="(t, n) in toolsLower" :key="n">
                          <span v-if="t.s" class="tsep" :style="{ width: t.w + 'px' }"><i></i></span>
                          <span v-else class="tool" :style="{ width: t.w + 'px' }"><svg class="ic16"><use :href="`#${t.i}`"/></svg><i v-if="t.c" class="caret"></i></span>
                        </template>
                        <div class="searchbox low"><span>Text to search...</span><b><svg class="ic14"><use href="#search"/></svg></b></div>
                        <span class="tsep sp8"><i></i></span>
                        <span class="tool wide w42"><svg class="ic16"><use href="#saveBlue"/></svg><i class="caret"></i></span>
                        <span class="tsep sp8"><i></i></span>
                        <span class="tool w28"><svg class="ic16"><use href="#magdoc"/></svg></span>
                      </div>
                      <div class="grid grid-low">
                        <div class="ghead tall">
                          <div v-for="(c, n) in lowerCols" :key="n" class="gh" :style="{ width: c.w + 'px' }">
                            <span><template v-for="(l, k) in c.h" :key="k">{{ l }}<br v-if="k < c.h.length - 1"></template></span>
                            <i v-if="c.sort" class="sort"></i>
                          </div>
                          <div class="gh gh-scroll"></div>
                        </div>
                        <div class="lowbody">
                          <div class="lowrows">
                            <div v-for="(r, ri) in lowerRows" :key="ri" class="grow r21" :class="r.kind">
                              <div v-for="(c, n) in r.cells" :key="n" class="gc" :class="[c.c, { indc: n === 0 }]" :style="{ width: lowerCols[n].w + 'px' }">
                                <i v-if="c.ind" class="rowmark"></i>
                                <span v-if="c.box" class="chk">
                                  <svg v-if="c.box === 'on'" viewBox="0 0 13 13"><path d="M2.500 6.500l3 3.500 5-7.500" fill="none" stroke="#444" stroke-width="1.800"/></svg>
                                </span>
                                <template v-if="c.v">{{ c.v }}</template>
                              </div>
                            </div>
                          </div>
                          <div class="vscroll">
                            <svg class="sb-ch" viewBox="0 0 10 7"><path d="M1 5.500l4-4 4 4" fill="none" stroke="#666" stroke-width="1.600"/></svg>
                            <i class="sb-mark"></i>
                            <i class="sb-thumb"></i>
                            <svg class="sb-ch down" viewBox="0 0 10 7"><path d="M1 1.500l4 4 4-4" fill="none" stroke="#666" stroke-width="1.600"/></svg>
                          </div>
                        </div>
                        <div class="gfoot lf">
                          <span class="fbox fl1">16</span>
                          <span class="fbox fl2">$36,244.25</span>
                          <span class="fbox fl3">$0.00</span>
                          <span class="fbox fl4">$0.00</span>
                          <span class="fbox fl5">$36,244.25</span>
                        </div>
                      </div>
                    </div>
                  </div>
                </div>
              </div>
            </div>
          </div>
        </div>
      </div>

      <footer class="status"><i class="grip"></i></footer>

      <svg class="arrow" viewBox="0 0 130 112"><path d="M2 2.500L30.500 13.500 23.500 20 120 101.500 118.500 106.500 112.500 106.500 19.500 29 15.500 29z" fill="#fe0000"/></svg>
    </div>
  </div>
</template>

<style>
html, body { margin: 0; background: #000; }
</style>

<style scoped>
.screen { width: 1538px; height: 737px; box-sizing: border-box; padding: 7px 7px 7px 7px; background: #000; overflow: hidden; font: 11px/13px "Liberation Sans", Arial, sans-serif; color: #3c3c3c; }
.window { position: relative; width: 1523px; height: 723px; display: flex; flex-direction: column; background: #fff; box-sizing: border-box; border: 1px solid #0070c6; border-bottom: 0; }
.defs { position: absolute; }
.ic16 { width: 16px; height: 16px; flex: none; display: block; }
.ic14 { width: 14px; height: 14px; flex: none; display: block; }
.ic32 { width: 32px; height: 32px; flex: none; display: block; }

.header { display: flex; height: 52px; border-bottom: 1px solid #cfcfcf; box-sizing: content-box; }
.logo-col { width: 60px; flex: none; position: relative; }
.logo { width: 48px; height: 48px; margin: 2px 0 0 5px; display: block; }
.header-main { flex: 1; display: flex; flex-direction: column; }
.titlebar { height: 31px; display: flex; align-items: center; }
.qat { width: 563px; flex: none; display: flex; align-items: center; }
.qat-ic { margin: -1px 6px 0 6px; }
.qat-more { margin: -1px 0 0 14px; width: 0; height: 0; border: 4px solid transparent; border-top: 4px solid #777; border-bottom: 0; position: relative; }
.qat-more::before { content: ""; position: absolute; left: -4px; top: -6px; width: 8px; height: 1px; background: #777; }
.title { color: #555; margin-top: -2px; white-space: nowrap; letter-spacing: -.12px; }
.winctl { margin-left: auto; display: flex; align-items: center; margin-top: -2px; }
.w-min { width: 9px; height: 2px; background: #555; margin: 4px 0 0; }
.w-max { width: 9px; height: 9px; border: 1px solid #555; border-top-width: 2px; margin-left: 20px; }
.w-close { width: 12px; height: 12px; margin: 0 13px 0 19px; }
.ribtabs { flex: 1; display: flex; align-items: flex-end; position: relative; }
.rtab { height: 20px; line-height: 22px; font-size: 11px; color: #444; }
.rtab.on { width: 53px; margin-left: 4px; text-align: center; box-sizing: border-box; height: 22px; line-height: 23px; margin-bottom: -1px; background: #fff; border: 1px solid #cfcfcf; border-bottom: 0; color: #1a7fd8; }
.rtab.view { margin-left: 12px; }
.rtab.tools { margin-left: 25px; }
.collapse { width: 9px; height: 6px; position: absolute; right: 16px; top: 8px; }

.ribbon { height: 92px; display: flex; padding-left: 2px; border-bottom: 1px solid #cfcfcf; }
.rgroup { height: 80px; margin-top: 6px; border-right: 1px solid #dcdcdc; display: flex; flex-direction: column; box-sizing: border-box; }
.rbtns { height: 70px; display: flex; }
.rbtn { flex: none; display: flex; flex-direction: column; align-items: center; color: #333; }
.rbtn.off { color: #9a9a9a; }
.rbtn.off svg { opacity: .9; }
.rlabel { margin-top: 5px; text-align: center; white-space: nowrap; line-height: 13px; }
.gname { height: 10px; line-height: 14px; text-align: center; color: #444; white-space: nowrap; }
.caret { display: inline-block; width: 0; height: 0; border: 3px solid transparent; border-top: 3px solid #555; border-bottom: 0; }
.cmini { border-top-color: #888; margin-left: 5px; vertical-align: middle; }
.cblock { display: block; margin: 5px auto 0; }

.main { flex: 1; display: flex; min-height: 0; }
.side { width: 125px; flex: none; border-right: 1px solid #aaa; display: flex; flex-direction: column; box-sizing: content-box; }
.side-head { height: 30px; display: flex; align-items: center; padding: 0 8px 0 6px; font-size: 14px; color: #555; }
.side-arrow { width: 8px; height: 11px; margin-left: auto; margin-right: 0; }
.side-list { flex: 1; padding-top: 2px; }
.side-item { height: 26px; display: flex; align-items: center; gap: 5px; padding-left: 8px; color: #444; }
.side-item.on { background: #f1f1f1; }
.side-split { height: 12px; background: #eee; display: flex; align-items: center; justify-content: center; }
.side-split i { width: 21px; height: 2px; background: repeating-linear-gradient(90deg, #888 0 2px, transparent 2px 4px); }
.nav-item { height: 36px; display: flex; align-items: center; gap: 6px; padding-left: 11px; font-size: 14px; color: #555; }
.nav-item.on { color: #2a8de0; }
.side-foot { height: 35px; display: flex; align-items: center; padding-left: 17px; gap: 12px; }
.foot-more { width: 9px; height: 6px; margin-left: 2px; }

.docarea { flex: 1; display: flex; flex-direction: column; margin-left: 1px; min-width: 0; margin-right: 1px; }
.doctabs { height: 28px; display: flex; align-items: flex-end; position: relative; border-bottom: 2px solid #0070c6; box-sizing: content-box; }
.doctab { width: 189px; height: 26px; background: #0070c6; color: #fff; display: flex; align-items: center; padding-left: 14px; box-sizing: border-box; }
.doctab span { margin-left: 2px; white-space: nowrap; }
.doc-x { width: 10px; height: 10px; margin-left: 13px; }
.doc-more { position: absolute; right: 6px; top: 11px; width: 0; height: 0; border: 4px solid transparent; border-top: 5px solid #777; border-bottom: 0; }
.docpanel { flex: 1; min-height: 0; margin-bottom: 2px; display: flex; flex-direction: column; border: 1px solid #aaa; border-top: 0; padding: 9px 5px 5px 5px; }

.evgroup { margin: 0; padding: 7px 4px 0 4px; height: 69px; box-sizing: border-box; flex: none; border: 1px solid #ccc; min-inline-size: 0; }
.evgroup legend { padding: 0 5px 0 1px; margin-left: 12px; display: flex; align-items: center; gap: 5px; color: #444; height: 14px; }
.form { display: flex; margin-top: 0; }
.fsec { display: grid; grid-auto-rows: 20px; row-gap: 2px; align-items: center; }
.fsec label { white-space: nowrap; color: #444; }
.dots { width: 15px; flex: none; display: flex; align-items: center; justify-content: center; }
.dots i { width: 2px; height: 15px; background: repeating-linear-gradient(180deg, #777 0 2px, transparent 2px 4px); }
.inp { height: 20px; box-sizing: border-box; border: 1px solid #ababab; display: flex; align-items: center; color: #333; }
.val { flex: 1; padding: 0 3px; white-space: nowrap; overflow: hidden; }
.inp.ro { background: #f0f0f0; }
.inp.right .val { text-align: right; }
.inp.lime { background: #adff2f; color: #222; }
.inp.orange { background: #ffa500; color: #222; }
.inp.yellow { background: #ffff99; color: #222; }
.inp.green { background: #32cd32; color: #111; }
.ibtn { width: 16px; height: 18px; flex: none; background: #eee; border-left: 1px solid #ccc; display: flex; align-items: center; justify-content: center; }
.ibtn.combo svg { width: 10px; height: 7px; }

.tabstrip { display: flex; align-items: flex-end; flex: none; }
.main-strip { height: 26px; margin-top: 2px; }
.sub-strip { height: 26px; margin-left: 0; }
.low-strip { height: 26px; }
.tab { height: 24px; box-sizing: border-box; border: 1px solid #ababab; border-left-width: 0; border-bottom: 0; display: flex; align-items: center; justify-content: center; gap: 3px; color: #444; white-space: nowrap; flex: none; }
.tab:first-child { border-left-width: 1px; }
.tab.on { height: 27px; margin-bottom: -1px; background: #fff; position: relative; z-index: 1; border-left-width: 1px; border-right-width: 1px; }
.panel-a { flex: 1; min-height: 0; border: 1px solid #ababab; padding: 2px 2px 1px 2px; display: flex; flex-direction: column; }
.panel-b { flex: 1; min-height: 0; border: 1px solid #ababab; padding: 0 3px 4px 3px; display: flex; flex-direction: column; }
.toolbar { height: 30px; flex: none; display: flex; align-items: center; margin-left: 2px; }
.tool { display: flex; align-items: center; justify-content: center; gap: 3px; flex: none; height: 100%; }
.tool.wide { gap: 13px; padding-left: 2px; box-sizing: border-box; }
.tool.w42 { width: 42px; }
.tool.w28 { width: 28px; }
.tsep { display: flex; justify-content: center; flex: none; }
.tsep i { width: 1px; height: 22px; background: #c4c4c4; display: block; }
.tsep.sp8 { width: 8px; }
.searchbox { width: 150px; height: 20px; box-sizing: border-box; border: 1px solid #ababab; display: flex; align-items: center; flex: none; margin: 0 7px 0 3px; color: #9b9b9b; padding-left: 4px; }
.searchbox span { flex: 1; }
.searchbox b { width: 17px; height: 18px; background: #f1f1f1; border-left: 1px solid #ccc; display: flex; align-items: center; justify-content: center; }
.box { flex: 1; min-height: 0; border: 1px solid #dcdcdc; padding: 1px; display: flex; flex-direction: column; }

.grid { border: 1px solid #ababab; box-sizing: border-box; flex: none; }
.grid-up { height: 109px; width: 1365px; display: flex; flex-direction: column; }
.ghead { display: flex; height: 19px; flex: none; }
.ghead.tall { height: 32px; }
.gh { box-sizing: border-box; border-right: 1px solid #ababab; border-bottom: 1px solid #ababab; padding: 0 4px 0 3px; display: flex; align-items: center; white-space: nowrap; overflow: hidden; position: relative; flex: none; color: #3c3c3c; }
.gh:last-child { border-right: 0; }
.gh-scroll { width: 16px; }
.sort { position: absolute; right: 14px; top: 7px; width: 0; height: 0; border: 5px solid transparent; border-bottom: 5px solid #777; border-top: 0; }
.grid-low .sort { right: 14px; top: 14px; }
.gbody { flex: 1; min-height: 0; border-bottom: 1px solid #ababab; }
.grow { display: flex; height: 21px; }
.gc { box-sizing: border-box; border-right: 1px solid #d9d9d9; border-bottom: 1px solid #d9d9d9; padding: 0 3px; display: flex; align-items: center; white-space: nowrap; overflow: hidden; flex: none; position: relative; }
.gc.r { justify-content: flex-end; }
.grow.sel .gc { background: #e3eff9; }
.grow.sel .gc:first-child, .grow .indc { background: #fff !important; border-right-color: #ababab; border-bottom-color: #fff; }
.grow.sel .gc.c-yellow { background: #ffff99; color: #222; }
.grow.sel .gc.c-none { background: #32cd32; color: #e8ffe8; }
.grow.odd .gc { background: #f9f9f9; }
.grow.even .gc { background: #efefef; }
.grow.sel .gc.c-pink, .grow .gc.c-pink { background: #ee82ee; color: #222; }
.grow.sel .gc.c-item { background: #fff; }
.gc:has(.chk) { justify-content: center; }
.rowmark { width: 0; height: 0; border: 4px solid transparent; border-left: 4px solid #666; border-right: 0; margin-left: 3px; }
.chk { width: 13px; height: 13px; background: #fff; border: 1px solid #aaa; display: block; box-sizing: content-box; }
.chk svg { width: 13px; height: 13px; display: block; }
.gfoot { height: 30px; flex: none; display: flex; align-items: center; }
.fbox { height: 23px; box-sizing: border-box; border: 1px solid #ababab; display: flex; align-items: center; justify-content: flex-end; padding-right: 2px; flex: none; }
.fu1 { margin-left: 19px; width: 57px; }
.fu2 { margin-left: auto; margin-right: 4px; width: 123px; }
.vsplit { height: 17px; flex: none; display: flex; align-items: flex-start; justify-content: center; padding-top: 6px; box-sizing: border-box; }
.vsplit i { width: 19px; height: 2px; background: repeating-linear-gradient(90deg, #777 0 2px, transparent 2px 4px); }
.lower { margin: 0 9px 0 4px; flex: none; height: 207px; display: flex; flex-direction: column; }
.panel-c { flex: 1; min-height: 0; border: 1px solid #ababab; padding: 0 3px 4px 4px; display: flex; flex-direction: column; }
.t-low { margin-left: 0; border-bottom: 1px solid #dcdcdc; }
.grid-low { margin-top: 1px; flex: 1; min-height: 0; display: flex; flex-direction: column; }
.lowbody { height: 79px; flex: none; display: flex; overflow: hidden; border-bottom: 1px solid #ababab; box-sizing: content-box; }
.lowrows { flex: 1; overflow: hidden; }
.lowrows .grow { width: 1327px; }
.vscroll { width: 16px; flex: none; display: flex; flex-direction: column; align-items: center; position: relative; }
.sb-ch { width: 10px; height: 7px; margin-top: 6px; }
.sb-mark { width: 9px; height: 2px; background: #3f8f2f; margin-top: 4px; }
.sb-thumb { width: 16px; height: 15px; background: #c8c8c8; }
.sb-ch.down { margin-top: auto; margin-bottom: 7px; }
.lf { height: 29px; }
.fl1 { margin-left: 184px; width: 128px; }
.fl2 { margin-left: 652px; width: 101px; }
.fl3 { margin-left: 2px; width: 66px; }
.fl4 { margin-left: 4px; width: 78px; }
.fl5 { margin-left: 3px; width: 107px; }

.status { height: 24px; background: #0070c6; flex: none; position: relative; margin: 0 -1px; }
.grip { position: absolute; right: 2px; bottom: 2px; width: 8px; height: 8px; background: radial-gradient(circle, #bcd9f0 0 1px, transparent 1px) 0 0 / 3px 3px; clip-path: polygon(100% 0, 100% 100%, 0 100%); }
.arrow { position: absolute; left: 910px; top: 382px; width: 130px; height: 112px; pointer-events: none; }
</style>
